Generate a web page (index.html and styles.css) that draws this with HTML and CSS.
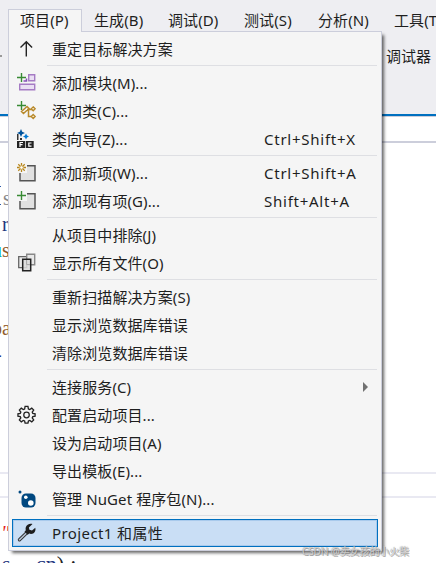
FILE: index.html
```html
<!DOCTYPE html>
<html lang="zh-CN">
<head>
  <meta charset="UTF-8">
  <title>Project1</title>
  <link rel="stylesheet" href="styles.css">
</head>
<body>
  <div class="window">
    <div class="menubar">
      <div class="tab open">项目(P)</div>
      <div class="tab">生成(B)</div>
      <div class="tab wide">调试(D)</div>
      <div class="tab">测试(S)</div>
      <div class="tab wide">分析(N)</div>
      <div class="tab">工具(T</div>
    </div>
    <div class="toolbar"><span class="drop"></span><span>调试器</span></div>
    <div class="navbar"></div>
    <div class="editor">
      <div class="line gray"><span class="guide"></span>s</div>
      <div class="line navy n1">r</div>
      <div class="line brown n2"><span class="sel">u</span>s</div>
      <div class="line"></div>
      <div class="line"></div>
      <div class="line brown n3">pa</div>
      <div class="line navy n4">-</div>
    </div>
    <div class="splitter"></div>
    <div class="output">
      <div class="line red">"</div>
      <div class="line navy last"><span>s,</span><span class="arg">cn<b>)</b></span><b>;</b></div>
    </div>
  </div>

  <div class="menu">
    <div class="item">
      <svg class="icon" viewBox="0 0 20 20"><path d="M9.300 17.500V3M3.500 8.500l5.800-5.800 5.800 5.800" fill="none" stroke="#222" stroke-width="1.400"/></svg>
      <span>重定目标解决方案</span>
    </div>
    <div class="sep"></div>
    <div class="item">
      <svg class="icon" viewBox="0 0 20 20"><path d="M4.500 0v9M0 4.500h9" stroke="#388a34" stroke-width="1.400"/><path d="M11.700 1.700h6v6h-6zM2.700 11.200h15v5.500h-15z" fill="#eadff3" stroke="#a57bc4" stroke-width="1.400"/><path d="M6.500 8h3V5.500" fill="none" stroke="#8650b8" stroke-width="1.500"/></svg>
      <span>添加模块(M)...</span>
    </div>
    <div class="item">
      <svg class="icon" viewBox="0 0 20 20"><path d="M4.500 0v9M0 4.500h9" stroke="#388a34" stroke-width="1.400"/><path d="M4.500 10.500l5.500-5 2 2-5.500 5zM10 8.500h5.500M11.500 9v6.500h3" fill="none" stroke="#b8892b" stroke-width="1.500"/><path d="M16.200 5.800l2 2-2 2-2-2zM16.200 13.500l2 2-2 2-2-2z" fill="#f5ead1" stroke="#b8892b" stroke-width="1.300"/></svg>
      <span>添加类(C)...</span>
    </div>
    <div class="item">
      <svg class="icon" viewBox="0 0 20 20"><path d="M0 5h1.500v6H0zM3 9h2v2H3z" fill="#333"/><path d="M4 0l1.200 2.800L8 4 5.200 5.200 4 8 2.800 5.200 0 4l2.800-1.200z" fill="#00539c"/><path d="M9 4.500l1 2 2 1-2 1-1 2-1-2-2-1 2-1z" fill="#0078d4"/><path d="M0 12h8v7H0zM8.700 12h8v7h-8z" fill="#222"/><path d="M3 18v-4.500h3M3 15.700h2.500M14.500 14h-2.700v3.200h2.700" fill="none" stroke="#fff" stroke-width="1.200"/></svg>
      <span>类向导(Z)...</span><span class="key">Ctrl+Shift+X</span>
    </div>
    <div class="sep"></div>
    <div class="item">
      <svg class="icon" viewBox="0 0 20 20"><path d="M3 10h7V2h8v16H3z" fill="#e1e1e1"/><path d="M10 2.700h8v15H3V10" fill="none" stroke="#555" stroke-width="1.500"/><path d="M4.500 0v2.500M4.500 6.500V9M0 4.500h2.500M6.500 4.500H9M1.300 1.300l1.800 1.800M5.900 5.900l1.800 1.800M7.700 1.300L5.900 3.100M3.100 5.900L1.300 7.700" stroke="#b8861b" stroke-width="1.300"/><circle cx="4.500" cy="4.500" r="1.800" fill="#fff" stroke="#c79a36"/></svg>
      <span>添加新项(W)...</span><span class="key">Ctrl+Shift+A</span>
    </div>
    <div class="item">
      <svg class="icon" viewBox="0 0 20 20"><path d="M3 10h7V2h8v16H3z" fill="#e1e1e1"/><path d="M10 2.700h8v15H3V10" fill="none" stroke="#555" stroke-width="1.500"/><path d="M4.500 0v9M0 4.500h9" stroke="#388a34" stroke-width="1.400"/></svg>
      <span>添加现有项(G)...</span><span class="key">Shift+Alt+A</span>
    </div>
    <div class="sep"></div>
    <div class="item"><span class="icon"></span><span>从项目中排除(J)</span></div>
    <div class="item">
      <svg class="icon" viewBox="0 0 20 20"><path d="M1.700 3.700h8v11h-8z" fill="#ececec" stroke="#666" stroke-width="1.300"/><path d="M9.700 1.200h8v10.500h-8z" fill="#e8e8e8" stroke="#888" stroke-width="1.400"/><path d="M5.700 6.200h8v11.500h-8z" fill="#ddd" fill-opacity=".85" stroke="#222" stroke-width="1.500"/><path d="M9.500 7v4.500H13" fill="none" stroke="#aaa"/></svg>
      <span>显示所有文件(O)</span>
    </div>
    <div class="sep"></div>
    <div class="item"><span class="icon"></span><span>重新扫描解决方案(S)</span></div>
    <div class="item"><span class="icon"></span><span>显示浏览数据库错误</span></div>
    <div class="item"><span class="icon"></span><span>清除浏览数据库错误</span></div>
    <div class="sep"></div>
    <div class="item"><span class="icon"></span><span>连接服务(C)</span><span class="arrow"></span></div>
    <div class="item">
      <svg class="icon" viewBox="0 0 21 21"><path d="M8.500 1.500h3l.5 2.700 1.400.6 2.100-1.500 2 2-1.500 2.100.6 1.400 2.400.4v2.600l-2.400.4-.6 1.400 1.500 2.100-2 2-2.100-1.500-1.400.6-.5 2.200h-3L8 16.800l-1.400-.6-2.100 1.500-2-2L4 13.600l-.6-1.400L1 11.800V9.200l2.400-.4L4 7.400 2.500 5.300l2-2 2.100 1.500L8 4.200z" fill="none" stroke="#222" stroke-width="1.400"/><circle cx="10" cy="10.500" r="2.900" fill="none" stroke="#222" stroke-width="1.300"/></svg>
      <span>配置启动项目...</span>
    </div>
    <div class="item"><span class="icon"></span><span>设为启动项目(A)</span></div>
    <div class="item"><span class="icon"></span><span>导出模板(E)...</span></div>
    <div class="item">
      <svg class="icon" viewBox="0 0 20 20"><circle cx="3" cy="3" r="1.500" fill="#004880"/><rect x="4.500" y="4.500" width="14" height="14" rx="4.500" fill="#004880"/><circle cx="8.800" cy="8.200" r="1.800" fill="#fff"/><circle cx="13.800" cy="14" r="2.800" fill="#fff"/></svg>
      <span>管理 NuGet 程序包(N)...</span>
    </div>
    <div class="sep"></div>
    <div class="item active">
      <svg class="icon" viewBox="0 0 20 20"><path d="M10 9.500l-7.500 7.200" stroke="#333" stroke-width="3.400" stroke-linecap="round"/><path d="M9.500 10l-7 6.700" stroke="#b5c3d5" stroke-width="1.500" stroke-linecap="round"/><path d="M15.500 1c-3-.8-5.800.6-6.700 3.300-.3 1-.3 2 0 3L7.500 8.800l3.200 3 1.500-1.200c2.800.9 5.200-.4 6-2.700.4-1 .4-2.100.1-3.200L15 7.400l-2.600-.6-.5-2.300z" fill="#1d1d1d"/></svg>
      <span>Project1 和属性</span>
    </div>
  </div>
  <div class="mark">CSDN @卖女孩的小火柴</div>
</body>
</html>
```

FILE: styles.css
```css
body {
  margin: 0;
  font-family: "Noto Sans", "Noto Sans CJK SC", sans-serif;
  font-size: 15px;
  color: #1e1e1e;
}
.window {
  width: 436px;
  height: 563px;
  overflow: hidden;
  background: #fff;
}
.menubar {
  display: flex;
  height: 31px;
  padding: 9px 0 0 8px;
  box-sizing: border-box;
  background: #eeeef2;
}
.tab {
  flex: none;
  width: 74px;
  height: 22px;
  padding-left: 12px;
  box-sizing: border-box;
  line-height: 22px;
  letter-spacing: 0.1px;
  white-space: nowrap;
}
.tab.wide {
  width: 76px;
}
.tab.open {
  padding-left: 11px;
  line-height: 20px;
  border: 1px solid #ccceDB;
  border-bottom: 0;
  background: #f5f5f5;
}
.toolbar {
  display: flex;
  align-items: center;
  height: 83px;
  padding-bottom: 34px;
  box-sizing: border-box;
  background: #eeeef2;
}
.drop {
  width: 2px;
  height: 2px;
  margin-right: 384px;
  background: #999;
}
.navbar {
  height: 25px;
  border-top: 2px solid #0070c0;
  border-bottom: 2px solid #ccceDB;
  box-shadow: inset 0 1px #ccceDB;
  margin-bottom: 42px;
}
.editor {
  height: 287px;
  overflow: hidden;
}
.line {
  display: flex;
  height: 26px;
  line-height: 26px;
  font-family: "Liberation Serif", serif;
  font-size: 20px;
  white-space: pre;
}
.gray { color: #888; }
.navy { color: #1f377f; }
.brown { color: #8f5b2c; }
.red { color: #e21f1f; }
.guide {
  width: 1px;
  height: 17px;
  margin: 1px 2px 0 0;
  border: 1px solid #2b57a8;
  border-width: 1px 0;
}
.n1 { padding-left: 2px; }
.n2 { margin-left: -8px; }
.n3 { margin-left: -8px; }
.n4 { margin-left: -5px; }
.sel {
  color: #0aa;
}
.splitter {
  height: 22px;
  border-top: 2px solid #e9e9f2;
  border-bottom: 2px solid #e9e9f2;
}
.output {
  padding-top: 22px;
}
.output .red {
  padding-left: 1px;
  font-style: italic;
}
.last {
  margin: 5px 0 0 2px;
  font-size: 22px;
}
.last .arg {
  margin: 0 6px 0 20px;
}
.last b {
  font-weight: normal;
  color: #222;
}
.menu {
  position: absolute;
  top: 31px;
  left: 8px;
  width: 374px;
  height: 520px;
  padding: 3px;
  box-sizing: border-box;
  background: #f5f5f5;
  border: 1px solid #ccceDB;
  box-shadow: 3px 3px 3px -1px rgba(0, 0, 0, 0.6);
}
/* hides the border under the open tab */
.menu::before {
  content: "";
  position: absolute;
  top: -1px;
  left: 0;
  width: 72px;
  height: 1px;
  background: #f5f5f5;
}
.item {
  display: flex;
  align-items: center;
  width: 366px;
  height: 28px;
  padding-left: 5px;
  box-sizing: border-box;
  line-height: 28px;
  letter-spacing: 0.1px;
  white-space: nowrap;
}
.icon {
  flex: none;
  width: 20px;
  height: 20px;
  margin-right: 15px;
}
.item.active {
  padding-left: 4px;
  border: 1px solid #0070c0;
  box-shadow: inset 0 0 0 1px #a9caec;
  background: #c9def5;
  letter-spacing: 0.4px;
}
.key {
  width: 114px;
  margin-left: auto;
  letter-spacing: 0.75px;
}
.arrow {
  margin: 0 10px 0 auto;
  border: 5px solid transparent;
  border-left: 5px solid #717171;
  border-right: 0;
}
.sep {
  height: 1px;
  margin: 2px 1px 3px 35px;
  background: #dedfe3;
}
.mark {
  position: absolute;
  left: 302px;
  top: 544px;
  font-size: 10px;
  line-height: 15px;
  letter-spacing: -0.1px;
  color: rgba(255, 255, 255, 0.6);
  text-shadow: 0 0 1px #777, 1px 1px 0 rgba(110, 110, 110, 0.6);
  white-space: nowrap;
}
```
